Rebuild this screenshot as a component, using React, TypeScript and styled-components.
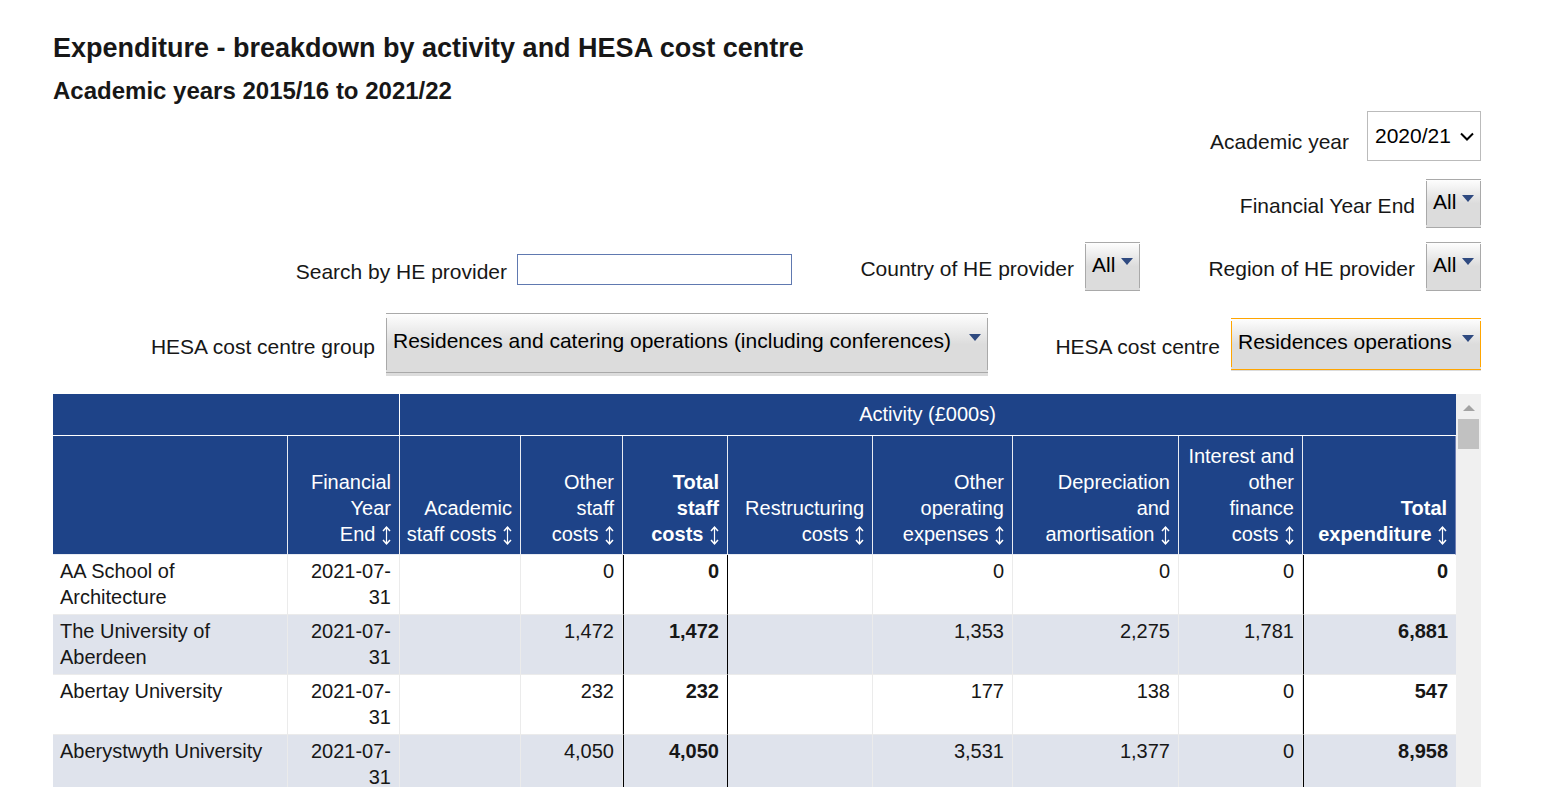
import React from 'react';
import styled, { createGlobalStyle } from 'styled-components';

const GlobalStyle = createGlobalStyle`
  *, *::before, *::after { box-sizing: border-box; }
  body {
    margin: 0;
    background: #fff;
    color: #171717;
    font-family: "Liberation Sans", Arial, sans-serif;
  }
`;

const Page = styled.main`
  display: flex;
  flex-direction: column;
  height: 100vh;
  padding: 32px 70px 0 53px;
  overflow: hidden;
`;

const Title = styled.h1`
  margin: 0;
  font-size: 27px;
  line-height: 32px;
`;

const Subtitle = styled.h2`
  margin: 12px 0 6px;
  font-size: 24px;
  line-height: 29px;
`;

const Filters = styled.form`
  display: flex;
  flex-direction: column;
  margin-bottom: 18px;
`;

const FilterRow = styled.div<{ $space?: number }>`
  display: flex;
  justify-content: flex-end;
  align-items: center;
  gap: 64px;
  margin-top: ${(p) => p.$space ?? 0}px;
`;

const Field = styled.div<{ $gap?: number; $drop?: number; $labelWidth?: number }>`
  display: flex;
  align-items: center;
  gap: ${(p) => p.$gap ?? 11}px;
  padding-top: ${(p) => p.$drop ?? 0}px;

  label {
    min-width: ${(p) => p.$labelWidth ?? 0}px;
  }
`;

const Label = styled.label<{ $drop?: number }>`
  padding-top: ${(p) => p.$drop ?? 4}px;
  font-size: 21px;
  line-height: 26px;
  text-align: right;
  white-space: nowrap;
`;

const SelectWrap = styled.span`
  position: relative;
  display: block;

  svg {
    position: absolute;
    right: 7px;
    top: 21px;
    pointer-events: none;
  }
`;

const YearSelect = styled.select`
  appearance: none;
  display: block;
  width: 114px;
  height: 50px;
  padding: 0 0 1px 7px;
  border: 1px solid #bbb;
  border-radius: 0;
  background: #fff;
  color: #000;
  font: 21px/26px "Liberation Sans", Arial, sans-serif;
`;

const SearchInput = styled.input`
  width: 275px;
  height: 31px;
  padding: 0 6px;
  border: 1px solid #6079b0;
  border-radius: 0;
  background: #fff;
  font: 20px/26px "Liberation Sans", Arial, sans-serif;
`;

interface DropShape {
  $width: number;
  $height: number;
  $lift: number;
  $inset: number;
  $foot: number;
  $edge?: string;
}

const DropButton = styled.button<DropShape>`
  --edge: ${(p) => p.$edge ?? '#a9a9a9'};
  display: flex;
  align-items: center;
  justify-content: space-between;
  gap: 4px;
  min-width: ${(p) => p.$width}px;
  height: ${(p) => p.$height}px;
  padding: 0 7px ${(p) => p.$lift}px;
  border: 0;
  background:
    linear-gradient(var(--edge), var(--edge)) left top / 100% 1px no-repeat,
    linear-gradient(var(--edge), var(--edge)) left 0 bottom ${(p) => p.$foot}px / 100% 1px no-repeat,
    linear-gradient(var(--edge), var(--edge)) left 0 top ${(p) => p.$inset}px / 1px calc(100% - ${(p) => p.$inset + p.$foot + 3}px) no-repeat,
    linear-gradient(var(--edge), var(--edge)) right 0 top ${(p) => p.$inset}px / 1px calc(100% - ${(p) => p.$inset + p.$foot + 3}px) no-repeat,
    linear-gradient(#fff, #dcdcdc 50%, #dcdcdc);
  color: #000;
  font: 21px/26px "Liberation Sans", Arial, sans-serif;
  white-space: nowrap;

  svg {
    margin-bottom: 8px;
  }
`;

const TableArea = styled.div`
  display: flex;
  flex: 1;
  min-height: 0;
`;

const TableViewport = styled.div`
  flex: 1;
  min-width: 0;
  overflow: hidden;
`;

const Table = styled.table`
  width: 100%;
  table-layout: fixed;
  border-collapse: separate;
  border-spacing: 0;
  font-size: 20px;
  line-height: 26px;
`;

const GroupHead = styled.th<{ $last?: boolean }>`
  padding: 7px 8px 8px 7px;
  border-bottom: 1px solid #fff;
  border-right: ${(p) => (p.$last ? '0' : '1px solid #fff')};
  background: #1e4388;
  color: #fff;
  font-weight: 400;
  text-align: center;
`;

const ColumnHead = styled.th<{ $strong?: boolean }>`
  padding: 7px 8px 7px 6px;
  border-right: 1px solid #e8ebf2;
  border-bottom: 1px solid #e8ebf2;
  background: #1e4388;
  color: #fff;
  font-weight: ${(p) => (p.$strong ? 700 : 400)};
  text-align: right;
  vertical-align: bottom;
  white-space: pre;

  &:last-child {
    border-right-color: #6f7fb4;
  }
`;

const SortButton = styled.button`
  height: 19px;
  margin-left: 1px;
  padding: 0;
  border: 0;
  background: none;
  color: inherit;
  vertical-align: -4px;

  svg {
    display: block;
  }
`;

const Row = styled.tr`
  &:nth-child(even) {
    background: #dfe3ec;
  }
`;

const NameCell = styled.th`
  padding: 3px 7px 4px;
  border-right: 1px solid #ebebeb;
  border-bottom: 1px solid #ebebeb;
  font-weight: 400;
  text-align: left;
  vertical-align: top;
`;

const Cell = styled.td<{ $strong?: boolean; $ruleRight?: boolean }>`
  padding: 3px 8px 4px 7px;
  border-right: 1px solid ${(p) => (p.$ruleRight ? '#000' : '#ebebeb')};
  border-left: ${(p) => (p.$strong ? '1px solid #000' : '0')};
  border-bottom: 1px solid #ebebeb;
  font-weight: ${(p) => (p.$strong ? 700 : 400)};
  text-align: right;
  vertical-align: top;

  &:last-child {
    border-right: 0;
  }
`;

const Scrollbar = styled.div`
  display: flex;
  flex-direction: column;
  align-items: center;
  width: 25px;
  background: #f0f0f0;
`;

const ScrollUp = styled.button`
  display: flex;
  align-items: center;
  justify-content: center;
  width: 100%;
  height: 25px;
  padding: 2px 0 0;
  border: 0;
  background: none;
`;

const Thumb = styled.div`
  width: 21px;
  height: 30px;
  background: #c1c1c1;
`;

const DownTriangle = () => (
  <svg width="12" height="7" viewBox="0 0 12 7" aria-hidden="true">
    <path d="M0 0H12L6 7Z" fill="#2f4a80" />
  </svg>
);

const SortArrows = () => (
  <svg width="9" height="19" viewBox="0 0 9 19" fill="none" stroke="currentColor" aria-hidden="true">
    <path d="M4.5 1V18" strokeWidth="1.2" />
    <path d="M1 5L4.5 1.2L8 5M1 14L4.5 17.8L8 14" strokeWidth="1.5" />
  </svg>
);

interface DropProps {
  id: string;
  value: string;
  width?: number;
  height?: number;
  lift?: number;
  inset?: number;
  foot?: number;
  edge?: string;
}

const DropDown = ({ id, value, width = 55, height = 49, lift = 3, inset = 2, foot = 0, edge }: DropProps) => (
  <DropButton
    id={id}
    type="button"
    aria-haspopup="listbox"
    $width={width}
    $height={height}
    $lift={lift}
    $inset={inset}
    $foot={foot}
    $edge={edge}
  >
    {value}
    <DownTriangle />
  </DropButton>
);

const columns = [
  { label: 'Financial\nYear\nEnd', width: 112 },
  { label: 'Academic\nstaff costs', width: 121 },
  { label: 'Other\nstaff\ncosts', width: 102 },
  { label: 'Total\nstaff\ncosts', width: 105, strong: true, ruleRight: true },
  { label: 'Restructuring\ncosts', width: 145 },
  { label: 'Other\noperating\nexpenses', width: 140 },
  { label: 'Depreciation\nand\namortisation', width: 166 },
  { label: 'Interest and\nother\nfinance\ncosts', width: 124 },
  { label: 'Total\nexpenditure', width: 153, strong: true },
];

const rows = [
  { name: 'AA School of Architecture', values: ['2021-07-31', '', '0', '0', '', '0', '0', '0', '0'] },
  { name: 'The University of Aberdeen', values: ['2021-07-31', '', '1,472', '1,472', '', '1,353', '2,275', '1,781', '6,881'] },
  { name: 'Abertay University', values: ['2021-07-31', '', '232', '232', '', '177', '138', '0', '547'] },
  { name: 'Aberystwyth University', values: ['2021-07-31', '', '4,050', '4,050', '', '3,531', '1,377', '0', '8,958'] },
];

export default function App() {
  return (
    <>
      <GlobalStyle />
      <Page>
        <Title>Expenditure - breakdown by activity and HESA cost centre</Title>
        <Subtitle>Academic years 2015/16 to 2021/22</Subtitle>

        <Filters>
          <FilterRow>
            <Field $gap={18}>
              <Label htmlFor="year" $drop={12}>Academic year</Label>
              <SelectWrap>
                <YearSelect id="year" defaultValue="2020/21">
                  <option>2020/21</option>
                </YearSelect>
                <svg width="14" height="9" viewBox="0 0 14 9" fill="none" aria-hidden="true">
                  <path d="M1 1.5L7 7.5L13 1.5" stroke="#000" strokeWidth="2" />
                </svg>
              </SelectWrap>
            </Field>
          </FilterRow>

          <FilterRow $space={18}>
            <Field>
              <Label htmlFor="year-end">Financial Year End</Label>
              <DropDown id="year-end" value="All" />
            </Field>
          </FilterRow>

          <FilterRow $space={14}>
            <Field $gap={10} $drop={6}>
              <Label htmlFor="search">Search by HE provider</Label>
              <SearchInput id="search" type="text" />
            </Field>
            <Field $labelWidth={218}>
              <Label htmlFor="country">Country of HE provider</Label>
              <DropDown id="country" value="All" />
            </Field>
            <Field $labelWidth={211}>
              <Label htmlFor="region">Region of HE provider</Label>
              <DropDown id="region" value="All" />
            </Field>
          </FilterRow>

          <FilterRow $space={22}>
            <Field>
              <Label htmlFor="group">HESA cost centre group</Label>
              <DropDown
                id="group"
                value="Residences and catering operations (including conferences)"
                width={602}
                height={63}
                lift={7}
                inset={5}
                foot={3}
              />
            </Field>
            <Field $labelWidth={168}>
              <Label htmlFor="centre">HESA cost centre</Label>
              <DropDown
                id="centre"
                value="Residences operations"
                width={250}
                height={53}
                lift={5}
                inset={3}
                foot={1}
                edge="#ffa500"
              />
            </Field>
          </FilterRow>
        </Filters>

        <TableArea>
          <TableViewport>
            <Table>
              <colgroup>
                <col width={235} />
                {columns.map((c) => (
                  <col key={c.label} width={c.width} />
                ))}
              </colgroup>
              <thead>
                <tr>
                  <GroupHead colSpan={2} />
                  <GroupHead colSpan={8} scope="colgroup" $last>Activity (£000s)</GroupHead>
                </tr>
                <tr>
                  <ColumnHead />
                  {columns.map((c) => (
                    <ColumnHead key={c.label} scope="col" $strong={c.strong}>
                      {c.label}{' '}
                      <SortButton type="button" aria-label="Sort">
                        <SortArrows />
                      </SortButton>
                    </ColumnHead>
                  ))}
                </tr>
              </thead>
              <tbody>
                {rows.map((r) => (
                  <Row key={r.name}>
                    <NameCell scope="row">{r.name}</NameCell>
                    {r.values.map((v, i) => (
                      <Cell key={columns[i].label} $strong={columns[i].strong} $ruleRight={columns[i].ruleRight}>
                        {v}
                      </Cell>
                    ))}
                  </Row>
                ))}
              </tbody>
            </Table>
          </TableViewport>
          <Scrollbar>
            <ScrollUp type="button" aria-label="Scroll up">
              <svg width="12" height="6" viewBox="0 0 12 6" aria-hidden="true">
                <path d="M6 0L12 6H0Z" fill="#a3a3a3" />
              </svg>
            </ScrollUp>
            <Thumb />
          </Scrollbar>
        </TableArea>
      </Page>
    </>
  );
}
